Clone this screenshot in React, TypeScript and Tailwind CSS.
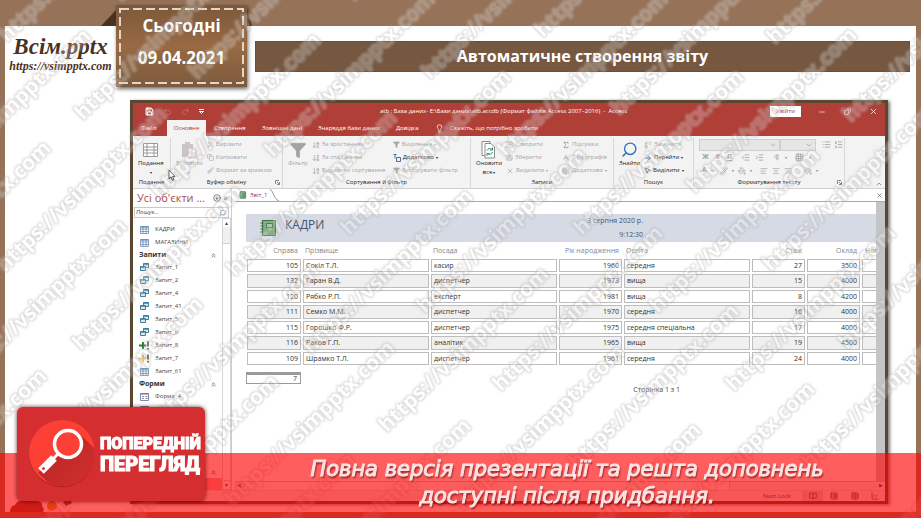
import React, { FunctionComponent, ReactNode } from "react";
import {
  AlignCenter,
  AlignLeft,
  AlignRight,
  ArrowDownAZ,
  ArrowDownZA,
  ArrowRight,
  BookOpen,
  Brush,
  ChartLine,
  ChevronDown,
  ChevronUp,
  ChevronsUp,
  CircleArrowDown,
  Copy,
  Filter,
  Grid3x3,
  IndentDecrease,
  IndentIncrease,
  Lightbulb,
  List,
  ListOrdered,
  Minus,
  MousePointer2,
  NotebookText,
  PaintBucket,
  Pilcrow,
  Redo2,
  Replace,
  Save,
  Scissors,
  Search,
  Sigma,
  SpellCheck,
  SquarePlus,
  Table,
  TableProperties,
  Undo2,
  X,
} from "lucide-react";

type Report = {
  id: number;
  surname: string;
  position: string;
  year: number;
  education: string;
  experience: number;
  salary: number;
};

const rows: Report[] = [
  { id: 105, surname: "Сокіл Т.Л.", position: "касир", year: 1960, education: "середня", experience: 27, salary: 3500 },
  { id: 132, surname: "Гаран В.Д.", position: "диспетчер", year: 1973, education: "вища", experience: 15, salary: 4000 },
  { id: 120, surname: "Рябко Р.П.", position: "експерт", year: 1981, education: "вища", experience: 8, salary: 4200 },
  { id: 111, surname: "Семко М.М.", position: "диспетчер", year: 1970, education: "середня", experience: 16, salary: 4000 },
  { id: 115, surname: "Горошко Ф.Р.", position: "диспетчер", year: 1975, education: "середня спеціальна", experience: 17, salary: 4000 },
  { id: 116, surname: "Раков Г.П.", position: "аналітик", year: 1965, education: "вища", experience: 19, salary: 4500 },
  { id: 109, surname: "Шрамко Т.Л.", position: "диспетчер", year: 1961, education: "середня", experience: 24, salary: 4000 },
];

// first text of every diagonal column, the rest go down by STEP
const STEP = [76, 78];
const COLUMNS = [
  [-191, 457],
  [-111, 307],
  [-147, 117],
  [7, 43],
  [121, 2],
  [354, 2],
  [543, 38],
  [775, 45],
];

const Watermark: FunctionComponent = () => (
  <svg className="pointer-events-none absolute inset-0 h-full w-full" aria-hidden="true">
    <defs>
      <filter id="outline" x="0" y="0" width="100%" height="100%" colorInterpolationFilters="sRGB">
        <feMorphology in="SourceAlpha" operator="dilate" radius="1" result="fat" />
        <feGaussianBlur in="fat" stdDeviation="0.8" result="wide" />
        <feComposite in="wide" in2="SourceAlpha" operator="out" result="ring" />
        <feFlood floodColor="#bab6b4" floodOpacity="0.5" />
        <feComposite in2="ring" operator="in" result="edge" />
        <feFlood floodColor="#ffffff" floodOpacity="0.25" />
        <feComposite in2="SourceAlpha" operator="in" result="body" />
        <feMerge>
          <feMergeNode in="body" />
          <feMergeNode in="edge" />
        </feMerge>
      </filter>
    </defs>
    <g filter="url(#outline)" className="font-['Open_Sans'] text-[21px] font-bold">
      <rect width="100%" height="100%" fill="none" />
      {COLUMNS.map(([x, y]) =>
        [0, 1, 2, 3, 4, 5, 6, 7]
          .map((k) => [x + k * STEP[0], y + k * STEP[1]])
          .filter(([left, top]) => left > -150 && top < 650 && left < 921)
          .map(([left, top]) => (
            <text key={`${left}-${top}`} transform={`translate(${left} ${top}) rotate(-44)`}>
              https://vsimpptx.com
            </text>
          ))
      )}
    </g>
  </svg>
);

const Cmd: FunctionComponent<{ icon: ReactNode; label: string; dark?: boolean; menu?: boolean }> = ({
  icon,
  label,
  dark,
  menu,
}) => (
  <button
    type="button"
    className={`flex h-[13px] items-center gap-[2px] whitespace-nowrap ${dark ? "text-[#222]" : "text-[#a3a3a3]"}`}
  >
    {icon}
    {label}
    {menu && <span className="text-[4px]">▾</span>}
  </button>
);

const Big: FunctionComponent<{ icon: ReactNode; label: string; dark?: boolean; second?: ReactNode }> = ({
  icon,
  label,
  dark,
  second,
}) => (
  <button
    type="button"
    className={`flex shrink-0 flex-col items-center pt-[2px] leading-[9px] ${dark ? "text-[#222]" : "text-[#a3a3a3]"}`}
  >
    <span className="flex h-[19px] items-center">{icon}</span>
    <span>{label}</span>
    <span>
      {second}
      {second !== undefined && <span className="text-[4px]"> ▾</span>}
    </span>
  </button>
);

const Group: FunctionComponent<{ title: string; width: string; launcher?: boolean; children: ReactNode }> = ({
  title,
  width,
  launcher,
  children,
}) => (
  <section className={`relative flex shrink-0 flex-col border-r border-[#d8d8d8] ${width}`}>
    <div className="flex h-[39px] gap-[4px] px-[5px]">{children}</div>
    <h2 className="h-[11px] text-center leading-[11px] whitespace-nowrap text-[#222]">{title}</h2>
    {launcher && (
      <svg className="absolute right-[2px] bottom-[3px]" width="5" height="5" stroke="#888" fill="none">
        <path d="M0.5 4V0.5H4M2 2l2.5 2.5M4.5 2v2.5H2" />
      </svg>
    )}
  </section>
);

const TitleBar: FunctionComponent = () => (
  <div className="flex h-[17px] items-center pl-[12px] text-[6px] font-medium text-white">
    <div className="flex w-[235px] shrink-0 items-center gap-[9px]">
      <button type="button" aria-label="Зберегти"><Save size={9} strokeWidth={3} /></button>
      <button type="button" aria-label="Скасувати" className="text-[#c9736c]"><Undo2 size={9} /></button>
      <button type="button" aria-label="Повторити" className="text-[#c9736c]"><Redo2 size={9} /></button>
      <button type="button" aria-label="Панель">
        <svg width="5" height="6" fill="none" stroke="#fff"><path d="M0 0.5h5M0.5 2.5l2 2 2-2z" /></svg>
      </button>
    </div>
    <p className="whitespace-pre">atb : База даних- E:\Бази даних\atb.accdb (Формат файлів Access 2007–2016)  -  Access</p>
    <button type="button" className="mr-[17px] ml-auto h-[11px] w-[31px] bg-white text-[#a4373a]">Увійти</button>
    <div className="flex items-center gap-[18px] pr-[7px]">
      <button type="button" aria-label="Згорнути"><Minus size={8} /></button>
      <button type="button" aria-label="Відновити"><Copy size={7} className="-scale-x-100" /></button>
      <button type="button" aria-label="Закрити"><X size={9} /></button>
    </div>
  </div>
);

const RibbonTabs: FunctionComponent = () => (
  <nav className="flex h-[16px] items-center pl-[8px] text-[6px] font-medium whitespace-nowrap text-white">
    <a href="#file" className="w-[26px]">Файл</a>
    <a href="#home" className="flex h-full w-[39px] items-center justify-center bg-[#f3f3f3] text-[#b03a33]">Основне</a>
    <a href="#create" className="ml-[8px] w-[48px]">Створення</a>
    <a href="#external" className="w-[56px]">Зовнішні дані</a>
    <a href="#tools" className="w-[78px]">Знаряддя бази даних</a>
    <a href="#help" className="w-[39px]">Довідка</a>
    <Lightbulb size={9} />
    <a href="#tell" className="ml-[6px]">Скажіть, що потрібно зробити</a>
  </nav>
);

const Ribbon: FunctionComponent = () => (
  <div className="relative flex h-[52px] overflow-hidden bg-[#f3f3f3] pt-[2px] text-[6px] font-medium">
    <Group title="Подання" width="w-[38px]">
      <Big
        dark
        label="Подання"
        second=""
        icon={
          <svg width="15" height="16" fill="#fff" stroke="#9a9a9a">
            <path d="M0.5 1.5h14v13h-14zM0.5 5h14M0.5 8h14M0.5 11h14M4 1.5v13M11 1.5v13" />
          </svg>
        }
      />
    </Group>
    <Group title="Буфер обміну" width="w-[112px]" launcher>
      <Big
        label="Вставити"
        second=""
        icon={
          <svg width="16" height="18" fill="#c9c6c9">
            <path d="M1 3h3V1h5v2h3v13H1z" />
            <path d="M7 7h5l3 3v7H7z" fill="#f4eef4" stroke="#c5bcc5" />
          </svg>
        }
      />
      <div>
        <Cmd icon={<Scissors size={7} />} label="Вирізати" />
        <Cmd icon={<Copy size={7} />} label="Копіювати" />
        <Cmd icon={<Brush size={7} />} label="Формат за зразком" />
      </div>
    </Group>
    <Group title="Сортування й фільтр" width="w-[188px]">
      <Big label="Фільтр" icon={<Filter size={18} fill="#a3a3a3" strokeWidth={1} />} />
      <div className="w-[77px]">
        <Cmd icon={<ArrowDownAZ size={8} />} label="За зростанням" />
        <Cmd icon={<ArrowDownZA size={8} />} label="За спаданням" />
        <Cmd icon={<ArrowDownAZ size={8} />} label="Видалити сортування" />
      </div>
      <div>
        <Cmd icon={<Filter size={7} fill="#a9a9a9" />} label="Виділення" menu />
        <Cmd
          dark
          menu
          label="Додатково"
          icon={
            <svg width="8" height="8" fill="none" stroke="#4472a8">
              <path d="M0.5 0.5h3M2 0.5v4M3.5 3.5h4v4h-4z" />
            </svg>
          }
        />
        <Cmd icon={<Filter size={7} fill="#a9a9a9" />} label="Застосувати фільтр" />
      </div>
    </Group>
    <Group title="Записи" width="w-[143px]">
      <Big
        dark
        label="Оновити"
        second="все"
        icon={
          <svg width="15" height="18" fill="#fff" stroke="#8b8b8b">
            <path d="M1 0.5h8v14H1z" />
            <path d="M4 2.5h6l3.5 3.5v11H4z" />
            <path d="M6 9.5a3 3 0 0 1 5 -1M11.5 11a3 3 0 0 1 -5 1.5M11.5 6.5v2.5H9M6 15v-2.5h2.5" stroke="#2e9160" fill="none" />
          </svg>
        }
      />
      <div className="w-[52px]">
        <Cmd icon={<SquarePlus size={7} />} label="Створити" />
        <Cmd icon={<Save size={7} />} label="Зберегти" />
        <Cmd icon={<X size={8} />} label="Видалити" menu />
      </div>
      <div>
        <Cmd icon={<Sigma size={8} strokeWidth={3} />} label="Підсумки" />
        <Cmd icon={<SpellCheck size={8} />} label="Орфографія" />
        <Cmd icon={<Table size={8} />} label="Додатково" menu />
      </div>
    </Group>
    <Group title="Пошук" width="w-[80px]">
      <Big dark label="Знайти" icon={<Search size={17} color="#2f73c0" className="-scale-x-100" />} />
      <div>
        <Cmd icon={<Replace size={8} />} label="Замінити" />
        <Cmd dark menu icon={<ArrowRight size={8} color="#2f73c0" strokeWidth={3} />} label="Перейти" />
        <Cmd dark menu icon={<MousePointer2 size={7} />} label="Виділити" />
      </div>
    </Group>
    <Group title="Форматування тексту" width="w-[151px]" launcher>
      <div className="text-[#9c9c9c]">
        <div className="flex h-[13px] items-center">
          <div className="relative flex h-[12px] w-[81px] items-center justify-end border border-[#cfcfcf] bg-[#e6e6e6] pr-[2px]">
            <select aria-label="Шрифт" className="absolute inset-0 w-full appearance-none" />
            <ChevronDown size={8} />
          </div>
          <div className="relative mr-[6px] flex h-[12px] w-[36px] items-center justify-end border border-[#cfcfcf] bg-[#e6e6e6] pr-[2px]">
            <select aria-label="Розмір" className="absolute inset-0 w-full appearance-none" />
            <ChevronDown size={8} />
          </div>
          <List size={9} />
          <ListOrdered size={9} className="ml-[3px]" />
        </div>
        <div className="flex h-[13px] items-center gap-[5px] pl-[3px] text-[7px] font-bold">
          <button type="button" className="w-[7px]">Ж</button>
          <button type="button" className="w-[7px] italic">К</button>
          <button type="button" className="w-[7px] underline">П</button>
          <IndentDecrease size={9} className="ml-[3px]" />
          <IndentIncrease size={9} />
          <Pilcrow size={7} className="ml-[4px]" />
          <span className="text-[4px]">▾</span>
          <Grid3x3 size={9} className="ml-[3px]" />
          <span className="text-[4px]">▾</span>
        </div>
        <div className="flex h-[13px] items-center gap-[4px] pl-[3px] text-[7px] font-bold">
          <button type="button">A</button>
          <span className="text-[4px]">▾</span>
          <Brush size={8} className="ml-[3px]" />
          <span className="text-[4px]">▾</span>
          <PaintBucket size={8} />
          <span className="text-[4px]">▾</span>
          <AlignLeft size={8} className="ml-[4px]" />
          <AlignCenter size={8} />
          <AlignRight size={8} />
          <PaintBucket size={8} className="ml-[8px]" />
          <span className="text-[4px]">▾</span>
        </div>
      </div>
    </Group>
    <button type="button" aria-label="Згорнути стрічку" className="mt-auto mr-[2px] ml-auto text-[#666]">
      <ChevronUp size={8} />
    </button>
    <svg className="absolute top-[33px] left-[35px]" width="8" height="13" fill="#fff" stroke="#333">
      <path d="M1 1v9l2-2 1.5 3.5 1.5-1L4.5 7.5H7z" />
    </svg>
  </div>
);

const TableIcon = () => (
  <svg width="9" height="8" fill="#fff" stroke="#5d7da6">
    <path d="M0.5 0.5h8v7h-8zM0.5 3h8M0.5 5.5h8M3 0.5v7M6 0.5v7" strokeWidth="0.7" />
    <path d="M0.5 1h8" />
  </svg>
);

const QueryIcon = () => (
  <svg width="9" height="9" fill="#dbe9ef" stroke="#3f7f9f">
    <path d="M3.5 0.5h5v4h-5z" />
    <path d="M3.5 1h5" strokeWidth="1.5" />
    <path d="M0.5 3.5h5v4h-5z" />
    <path d="M0.5 4h5" strokeWidth="1.5" />
  </svg>
);

const ActionIcon: FunctionComponent<{ color: string }> = ({ color }) => (
  <svg width="11" height="9">
    <path d="M3 1h2v2.5H7.5v2H5V8H3V5.5H0v-2h3z" fill={color} />
    <path d="M9 0.5v5M9 7v1.5" stroke="#111" strokeWidth="1.5" />
  </svg>
);

const FormIcon = () => (
  <svg width="9" height="8" fill="#fff" stroke="#7f8db5">
    <path d="M0.5 0.5h8v7h-8zM2 3.5h2M5.5 3.5h2M2 5.5h2M5.5 5.5h2" />
    <path d="M0.5 1h8" stroke="#c0505a" />
  </svg>
);

const NavItem: FunctionComponent<{ icon: ReactNode; label: string }> = ({ icon, label }) => (
  <li>
    <a href="#object" className="flex h-[13px] items-center gap-[5px] pl-[6px] text-[#444]">
      <span className="flex w-[11px] justify-center">{icon}</span>
      {label}
    </a>
  </li>
);

const NavHeading: FunctionComponent<{ label: string }> = ({ label }) => (
  <li className="flex h-[12px] items-center justify-between pr-[5px] pl-[6px] text-[7px] font-bold text-[#333]">
    {label}
    <ChevronsUp size={7} />
  </li>
);

const Navigation: FunctionComponent = () => (
  <aside className="flex w-[99px] shrink-0 flex-col border-r border-[#c8ccd4] bg-white text-[6px] font-medium">
    <header className="flex h-[18px] shrink-0 items-center pl-[4px] text-[#a94b45]">
      <h2 className="text-[11px] whitespace-nowrap">Усі об'єкти ...</h2>
      <CircleArrowDown size={8} className="ml-auto text-[#444]" />
      <span className="mx-[3px] text-[9px] text-[#444]">«</span>
    </header>
    <div className="mr-[2px] ml-[1px] flex h-[11px] shrink-0 items-center border border-[#c9c9c9] pr-[2px]">
      <input aria-label="Пошук" placeholder="Пошук..." className="w-full min-w-0 px-[1px] italic placeholder:text-[#444]" />
      <Search size={8} color="#2f73c0" className="-scale-x-100" />
    </div>
    <div className="flex min-h-0 flex-1">
      <div className="flex min-w-0 flex-1 flex-col justify-between overflow-hidden">
        <ul className="pt-[5px]">
          <NavItem icon={<TableIcon />} label="КАДРИ" />
          <NavItem icon={<TableIcon />} label="МАГАЗИНИ" />
          <NavHeading label="Запити" />
          {["Запит_1", "Запит_2", "Запит_4", "Запит_41", "Запит_5", "Запит_6"].map((name) => (
            <NavItem key={name} icon={<QueryIcon />} label={name} />
          ))}
          <NavItem icon={<ActionIcon color="#2b7a35" />} label="Запит_8" />
          <NavItem icon={<ActionIcon color="#e0b64a" />} label="Запит_7" />
          <NavItem icon={<TableIcon />} label="Запит_61" />
          <NavHeading label="Форми" />
          <NavItem icon={<FormIcon />} label="Форма_4" />
          <NavItem icon={<FormIcon />} label="Форма_5" />
        </ul>
        <ul>
          <li className="flex h-[12px] items-center justify-end pr-[5px]"><ChevronsUp size={7} /></li>
          <li className="h-[12px] bg-[#f6a9a9]" />
        </ul>
      </div>
      <div className="flex w-[9px] flex-col items-center border border-[#d5d5d5] bg-[#f0f0f0]">
        <span className="w-full bg-white text-center text-[5px] leading-[8px] text-[#444]">▲</span>
        <span className="mt-[16px] w-full flex-1 border-y border-[#d0d0d0] bg-white" />
        <span className="w-full bg-white text-center text-[5px] leading-[8px] text-[#444]">▼</span>
      </div>
    </div>
  </aside>
);

const ReportTable: FunctionComponent = () => (
  <table className="w-full table-fixed border-separate border-spacing-x-[2px] border-spacing-y-[2px] text-[7px] leading-[8px] text-[#333]">
    <colgroup>
      <col className="w-[54px]" />
      <col className="w-[126px]" />
      <col className="w-[126px]" />
      <col className="w-[63px]" />
      <col className="w-[126px]" />
      <col className="w-[53px]" />
      <col className="w-[53px]" />
      <col />
    </colgroup>
    <thead>
      <tr className="h-[13px] text-left whitespace-nowrap text-[#858585] [&>th]:font-normal">
        <th className="pr-[3px] text-right">Справа</th>
        <th className="pl-[2px]">Прізвище</th>
        <th className="pl-[2px]">Посада</th>
        <th className="pr-[3px] text-right">Рік народження</th>
        <th className="pl-[2px]">Освіта</th>
        <th className="pr-[3px] text-right">Стаж</th>
        <th className="pr-[3px] text-right">Оклад</th>
        <th className="pl-[3px]">Ном</th>
      </tr>
    </thead>
    <tbody>
      {rows.map((row) => (
        <tr
          key={row.id}
          className="h-[13px] even:h-[14px] even:bg-[#f0f0f0] [&>td]:border [&>td]:border-[#bdbdbd] [&>td]:px-[2px]"
        >
          <td className="text-right">{row.id}</td>
          <td>{row.surname}</td>
          <td>{row.position}</td>
          <td className="text-right">{row.year}</td>
          <td>{row.education}</td>
          <td className="text-right">{row.experience}</td>
          <td className="text-right">{row.salary}</td>
          <td />
        </tr>
      ))}
    </tbody>
  </table>
);

const Document: FunctionComponent = () => (
  <div className="flex min-w-0 flex-1 flex-col pl-[3px]">
    <div className="flex h-[13px] shrink-0 items-center border-b border-[#a9a9a9] pl-[4px] text-[6px] font-medium text-[#a4373a]">
      <NotebookText size={8} fill="#6fa97a" color="#2f6b3c" />
      <span className="ml-[3px]">Звіт_1</span>
      <svg className="ml-[3px] self-end" width="9" height="12" fill="none" stroke="#999">
        <path d="M0 0.5C3 0.5 4 11.5 9 11.5" />
      </svg>
      <button type="button" aria-label="Закрити вкладку" className="mr-[2px] ml-auto text-[#444]"><X size={7} /></button>
    </div>
    <div className="flex min-h-0 flex-1">
      <div className="min-w-0 flex-1 overflow-hidden bg-white pt-[12px] pl-[10px]">
        <header className="ml-[1px] flex h-[28px] items-center bg-[#d5dae5] text-[#44546a]">
          <svg className="ml-[14px]" width="17" height="18">
            <rect x="2.5" y="1.5" width="13" height="15" fill="#7fb080" stroke="#3f6f46" />
            <rect x="6.5" y="4.5" width="6" height="4" fill="#a9cfa6" stroke="#4f8055" />
            <path d="M0.5 4h3M0.5 7h3M0.5 10h3M0.5 13h3" stroke="#4a6a4e" />
          </svg>
          <h1 className="ml-[8px] self-start pt-[3px] text-[12px] leading-[16px]">КАДРИ</h1>
          <div className="ml-auto w-[290px] text-[7px] leading-[14px]">
            <p className="w-[57px] text-right whitespace-nowrap">3 серпня 2020 р.</p>
            <p className="w-[57px] text-right">9:12:30</p>
          </div>
        </header>
        <div className="-mr-[6px]">
          <ReportTable />
        </div>
        <div className="mt-[5px] ml-[1px] w-[55px] border border-t-3 border-[#9b9b9b] pr-[3px] text-right text-[7px] leading-[8px] text-[#444]">7</div>
        <p className="w-[435px] text-right text-[7px] leading-[12px] text-[#444]">Сторінка 1 з 1</p>
      </div>
      <div className="w-[9px] bg-[#c3c5c9]" />
    </div>
    <div className="flex h-[9px] shrink-0 items-center border-t border-[#c4c4c4] bg-[#ececec] px-[2px] text-[5px] text-[#444]">
      <span>◀</span>
      <span className="mx-[4px] h-full w-3/4 border-r border-[#c4c4c4] bg-[#f8f8f8]" />
      <span className="ml-auto">▶</span>
    </div>
  </div>
);

const StatusBar: FunctionComponent = () => (
  <footer className="flex h-[11px] shrink-0 items-center justify-end border-t border-[#d8d8d8] bg-[#ededed] text-[6px] font-medium text-[#333]">
    <span className="mr-[11px]">Num Lock</span>
    <span className="flex h-full w-[21px] items-center justify-center bg-[#d2d2d2]"><BookOpen size={8} /></span>
    <span className="flex w-[21px] justify-center"><TableProperties size={8} /></span>
    <span className="flex w-[21px] justify-center"><Table size={8} /></span>
    <span className="flex w-[20px] justify-center"><ChartLine size={8} /></span>
  </footer>
);

const PreviewBadge: FunctionComponent = () => (
  <a
    href="#preview"
    className="absolute bottom-[17px] left-[17px] flex h-[94px] w-[188px] items-center rounded-md bg-[#d52e30] pl-[11px] text-white shadow-[0_0_4px_rgba(60,0,0,0.8)]"
  >
    <svg width="68" height="70" className="shrink-0" fill="none">
      <defs>
        <linearGradient id="shade" x1="0" y1="0" x2="1" y2="1">
          <stop offset="0" stopColor="#b92226" />
          <stop offset="1" stopColor="#d8362f" />
        </linearGradient>
        <clipPath id="disc"><circle cx="34" cy="34" r="33" /></clipPath>
      </defs>
      <circle cx="34" cy="35" r="33" fill="#a92022" />
      <circle cx="34" cy="34" r="33" fill="#fd4036" />
      <g clipPath="url(#disc)">
        <path d="M51 14L84 47 50 90 10 54 30 34z" fill="url(#shade)" />
      </g>
      <circle cx="40" cy="25" r="12" fill="#fd4036" />
      <circle cx="40" cy="25" r="13.5" stroke="#fff" strokeWidth="3.5" />
      <path d="M31 34L24 41" stroke="#fff" strokeWidth="3" />
      <path d="M26 39L13 52" stroke="#fff" strokeWidth="8" />
      <circle cx="15.5" cy="49.5" r="1.5" fill="#e03a34" />
    </svg>
    <span className="ml-[4px] flex flex-col font-['Roboto',sans-serif] leading-[21px] font-black [-webkit-text-stroke:1px_white]">
      <span className="text-[16px]">ПОПЕРЕДНІЙ</span>
      <span className="text-[20px]">ПЕРЕГЛЯД</span>
    </span>
  </a>
);

const App: FunctionComponent = () => {
  return (
    <div className="relative flex h-screen flex-col overflow-hidden bg-[#967358] px-[5px] pt-[26px] pb-[6px] font-['Open_Sans','Noto_Sans',sans-serif]">
      <main className="flex min-h-0 flex-1 flex-col bg-white">
        <header className="flex h-[74px] shrink-0 items-start pr-[6px]">
          <a href="#vsimpptx" className="w-[111px] pt-[9px] text-center font-['Liberation_Serif',serif] font-bold text-[#4a3021] italic">
            <span className="block text-[23px] leading-[24px]">Всім.pptx</span>
            <span className="block text-[12px] leading-[14px]">https://vsimpptx.com</span>
          </a>
          <div className="relative -mt-[21px] h-[82px] w-[131px] bg-linear-to-b from-[#7c583b] via-[#996a43] to-[#7d5a3d] p-[3px] shadow-[1px_2px_4px_rgba(0,0,0,0.6)]">
            <svg className="absolute top-[5px] -left-[15px]" width="15" height="16"><path d="M15 0V16H0z" fill="#4b3220" /></svg>
            <svg className="absolute top-[5px] -right-[5px]" width="5" height="16"><path d="M0 0V16H5z" fill="#4b3220" /></svg>
            <div className="relative h-full pt-[2px] text-center text-[17px] leading-[32px] font-bold text-white">
              <svg className="absolute inset-0 h-full w-full" fill="none" stroke="#e3d6c6" strokeWidth="2">
                <rect x="1" y="1" width="123" height="74" strokeDasharray="9 4" />
              </svg>
              <p>Сьогодні</p>
              <p>09.04.2021</p>
            </div>
          </div>
          <h1 className="mt-[15px] ml-[8px] h-[31px] flex-1 border border-[#66503c] bg-[#765841] text-center text-[16px] leading-[29px] font-bold text-white">
            Автоматичне створення звіту
          </h1>
        </header>
        <section className="mr-[28px] mb-[8px] ml-[125px] flex min-h-0 flex-1 flex-col overflow-hidden border-3 border-[#5b4632] bg-white shadow-[2px_1px_3px_rgba(0,0,0,0.5)]">
          <div className="bg-[#b03f37]">
            <TitleBar />
            <RibbonTabs />
          </div>
          <Ribbon />
          <div className="flex min-h-0 flex-1 border-t border-[#d0d0d0]">
            <Navigation />
            <Document />
          </div>
          <StatusBar />
        </section>
      </main>
      <svg className="absolute bottom-[5px] left-[8px]" width="72" height="16">
        <path d="M2 15q0-6 5-7 2-5 10-5 6-2 12 1 6 1 5 5 3 3 1 6z" fill="#7a4a3a" />
        <circle cx="44" cy="9" r="5" fill="#c8a020" />
        <path d="M55 5l7-3 2 4-6 3z" fill="#301010" />
      </svg>
      <Watermark />
      <div className="absolute inset-x-0 bottom-0 h-[65px] bg-[#ff0000]/63 pl-[213px] text-center font-['DejaVu_Sans','Noto_Sans',sans-serif] text-[21px] leading-[27px] whitespace-nowrap text-[#fbe3e3] italic [-webkit-text-stroke:1px_#fbe3e3] [text-shadow:1px_2px_2px_rgba(110,0,0,0.8)]">
        <p className="pt-[3px]">Повна версія презентації та решта доповнень</p>
        <p>доступні після придбання.</p>
      </div>
      <PreviewBadge />
    </div>
  );
};

export default App;
